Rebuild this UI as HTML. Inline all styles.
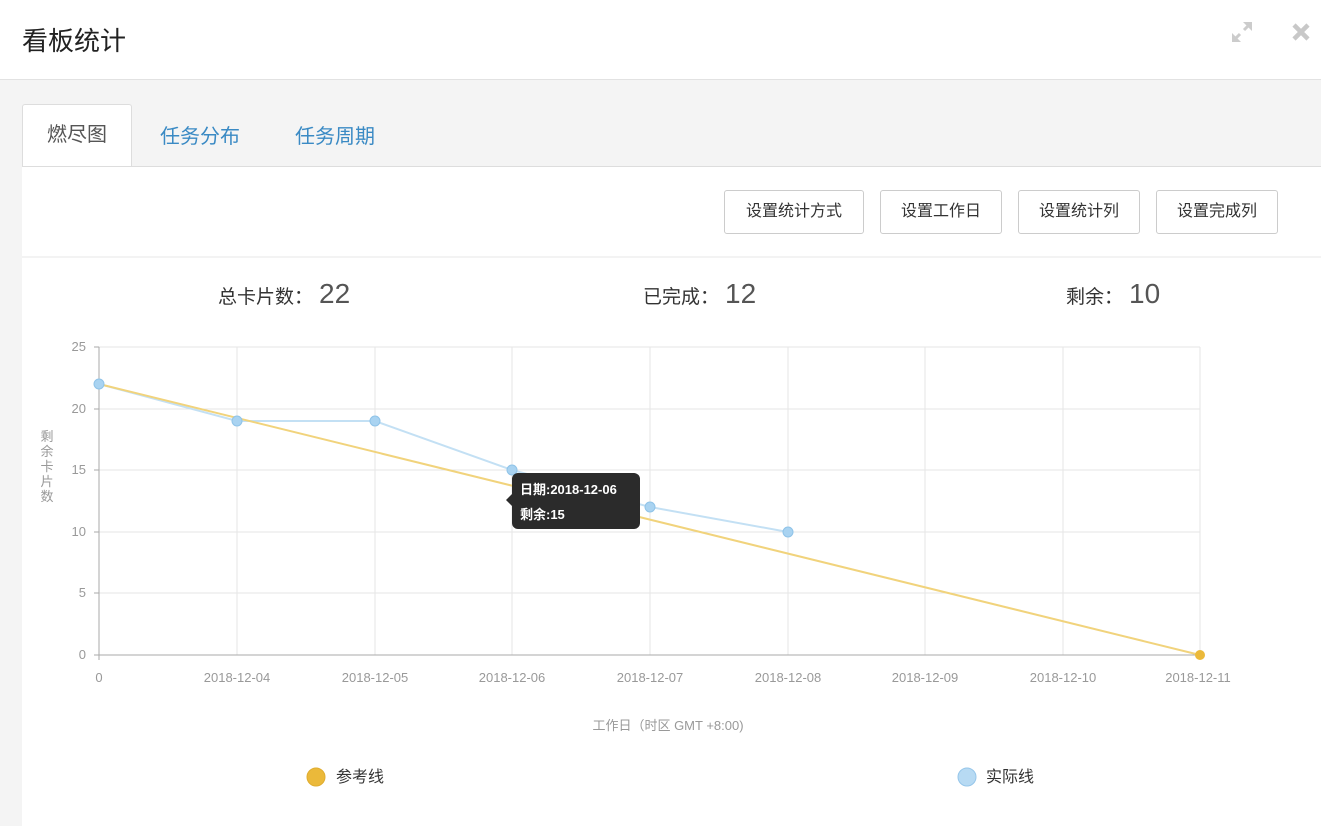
<!DOCTYPE html>
<html><head><meta charset="utf-8"><style>
body{margin:0;width:1321px;height:826px;overflow:hidden;background:#fff;font-family:"Liberation Sans","Noto Sans CJK SC",sans-serif;position:relative}
.hd{position:absolute;left:0;top:0;width:1321px;height:79px;border-bottom:1px solid #e2e2e2;background:#fff}
.hd h1{position:absolute;left:22px;top:21px;margin:0;font-size:26px;font-weight:normal;color:#222}
.body{position:absolute;left:0;top:80px;width:1321px;height:746px;background:#f4f4f4}
.tab{position:absolute;top:40px;font-size:20px;color:#3a8ac4}
.tab.act{left:22px;top:24px;width:108px;height:62px;background:#fff;border:1px solid #ddd;border-bottom:none;border-radius:3px 3px 0 0;color:#555;text-align:center;line-height:60px}
.content{position:absolute;left:22px;top:86px;width:1299px;height:660px;background:#fff;border-top:1px solid #ddd}
.btn{position:absolute;top:23px;height:42px;border:1px solid #ccc;border-radius:3px;font-size:16px;color:#333;line-height:42px;text-align:center;background:#fff}
.sep{position:absolute;left:0;top:89px;width:1299px;height:2px;background:#f3f3f3}
.stat{position:absolute;font-size:19px;color:#333}
.stat b{font-weight:normal;font-size:28px;color:#555;margin-left:6px}
</style></head><body>
<div class="hd"><h1>看板统计</h1>
<svg style="position:absolute;left:1229px;top:19px" width="26" height="26" viewBox="0 0 26 26" fill="none" stroke="#ccc" stroke-width="3"><path d="M4 22L11 15M22 4L15 11"/><path d="M3 14V23H12Z M23 12V3H14Z" fill="#ccc" stroke="none"/></svg>
<svg style="position:absolute;left:1291px;top:22px" width="20" height="20" viewBox="0 0 20 20" stroke="#c8c8c8" stroke-width="4.5"><path d="M3 3L17 17M17 3L3 17"/></svg>
</div>
<div class="body">
<div class="tab act">燃尽图</div>
<div class="tab" style="left:160px">任务分布</div>
<div class="tab" style="left:295px">任务周期</div>
<div class="content">
<div class="btn" style="left:702px;width:138px">设置统计方式</div>
<div class="btn" style="left:858px;width:120px">设置工作日</div>
<div class="btn" style="left:996px;width:120px">设置统计列</div>
<div class="btn" style="left:1134px;width:120px">设置完成列</div>
<div class="sep"></div>
</div></div>
<div class="stat" style="left:218px;top:278px">总卡片数：<b>22</b></div>
<div class="stat" style="left:643px;top:278px">已完成：<b>12</b></div>
<div class="stat" style="left:1066px;top:278px">剩余：<b>10</b></div>
<svg style="position:absolute;left:0;top:0" width="1321" height="826" font-family="Liberation Sans, Noto Sans CJK SC, sans-serif">
<g stroke="#e6e6e6" stroke-width="1">
<line x1="99" y1="347" x2="1200" y2="347"/><line x1="99" y1="409" x2="1200" y2="409"/><line x1="99" y1="470" x2="1200" y2="470"/><line x1="99" y1="532" x2="1200" y2="532"/><line x1="99" y1="593" x2="1200" y2="593"/>
<line x1="237" y1="347" x2="237" y2="655"/><line x1="375" y1="347" x2="375" y2="655"/><line x1="512" y1="347" x2="512" y2="655"/><line x1="650" y1="347" x2="650" y2="655"/><line x1="788" y1="347" x2="788" y2="655"/><line x1="925" y1="347" x2="925" y2="655"/><line x1="1063" y1="347" x2="1063" y2="655"/><line x1="1200" y1="347" x2="1200" y2="655"/>
</g>
<g stroke="#aaa"><line x1="99" y1="347" x2="99" y2="660"/><line x1="94" y1="655" x2="1200" y2="655"/>
<line x1="94" y1="347" x2="99" y2="347"/><line x1="94" y1="409" x2="99" y2="409"/><line x1="94" y1="470" x2="99" y2="470"/><line x1="94" y1="532" x2="99" y2="532"/><line x1="94" y1="593" x2="99" y2="593"/></g>
<g font-size="13" fill="#999" text-anchor="end"><text x="86" y="351">25</text><text x="86" y="413">20</text><text x="86" y="474">15</text><text x="86" y="536">10</text><text x="86" y="597">5</text><text x="86" y="659">0</text></g>
<g font-size="13" fill="#999" text-anchor="middle"><text x="99" y="682">0</text><text x="237" y="682">2018-12-04</text><text x="375" y="682">2018-12-05</text><text x="512" y="682">2018-12-06</text><text x="650" y="682">2018-12-07</text><text x="788" y="682">2018-12-08</text><text x="925" y="682">2018-12-09</text><text x="1063" y="682">2018-12-10</text><text x="1198" y="682">2018-12-11</text>
<text x="668" y="730">工作日（时区 GMT +8:00)</text></g>
<g font-size="13" fill="#999" text-anchor="middle"><text x="47" y="441">剩</text><text x="47" y="456">余</text><text x="47" y="471">卡</text><text x="47" y="486">片</text><text x="47" y="501">数</text></g>
<polyline points="99,384 237,421 375,421 512,470 650,507 788,532" fill="none" stroke="#c3e0f4" stroke-width="2"/>
<line x1="99" y1="384" x2="1200" y2="655" stroke="#f1d37c" stroke-width="2"/>
<g fill="#a9d3f1" stroke="#8fc3e8"><circle cx="99" cy="384" r="5"/><circle cx="237" cy="421" r="5"/><circle cx="375" cy="421" r="5"/><circle cx="512" cy="470" r="5"/><circle cx="650" cy="507" r="5"/><circle cx="788" cy="532" r="5"/></g>
<circle cx="1200" cy="655" r="5" fill="#ebb93a"/>
<path d="M518 473H634a6 6 0 0 1 6 6V523a6 6 0 0 1-6 6H518a6 6 0 0 1-6-6V506L506 500L512 494V479a6 6 0 0 1 6-6Z" fill="#2b2b2b"/>
<g font-size="13" fill="#fff" font-weight="bold"><text x="520" y="494">日期:2018-12-06</text><text x="520" y="519">剩余:15</text></g>
<circle cx="316" cy="777" r="9" fill="#ebb93a" stroke="#e0ad30"/><text x="336" y="782" font-size="16" fill="#333">参考线</text>
<circle cx="967" cy="777" r="9" fill="#b7daf3" stroke="#96c6ea"/><text x="986" y="782" font-size="16" fill="#333">实际线</text>
</svg>
</body></html>
